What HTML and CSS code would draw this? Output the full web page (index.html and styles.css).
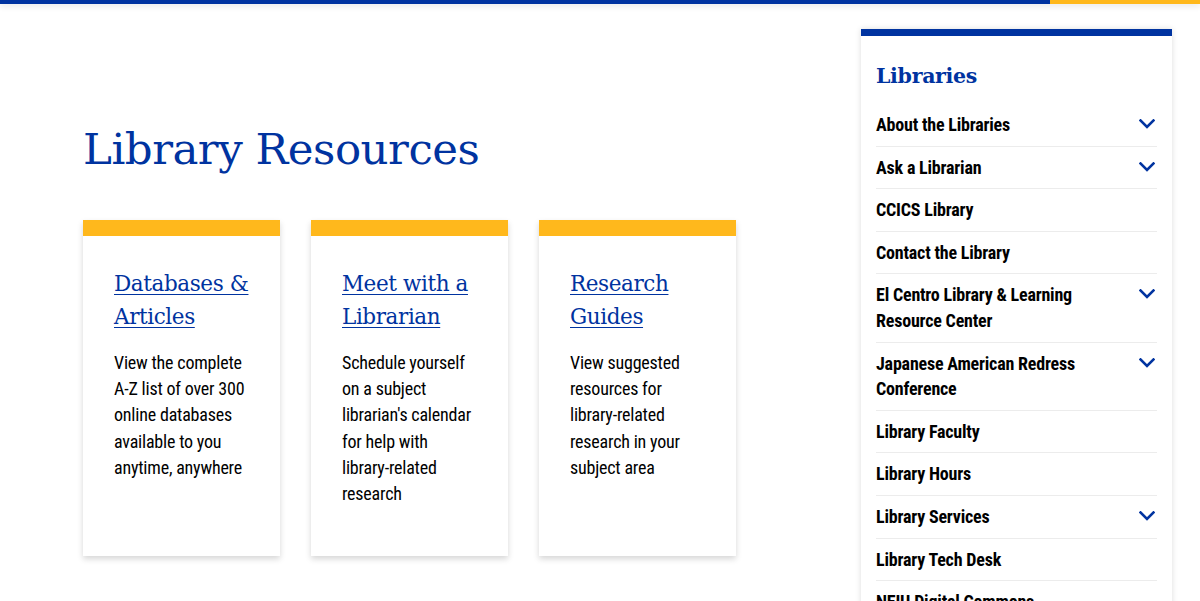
FILE: index.html
```html
<!DOCTYPE html>
<html lang="en">
<head>
<meta charset="utf-8">
<title>Library Resources</title>
<link rel="stylesheet" href="styles.css">
</head>
<body>
<div class="topbar"><div class="topbar-blue"></div><div class="topbar-gold"></div></div>
<div class="page">
  <main class="main">
    <h1 class="title">Library Resources</h1>
    <div class="cards">
      <div class="card">
        <a class="card-link" href="#">Databases &amp; Articles</a>
        <p class="card-text">View the complete A-Z list of over 300 online databases available to you anytime, anywhere</p>
      </div>
      <div class="card">
        <a class="card-link" href="#">Meet with a Librarian</a>
        <p class="card-text">Schedule yourself on a subject librarian's calendar for help with library-related research</p>
      </div>
      <div class="card">
        <a class="card-link" href="#">Research Guides</a>
        <p class="card-text">View suggested resources for library-related research in your subject area</p>
      </div>
    </div>
  </main>
  <aside class="sidebar">
    <h2 class="side-title">Libraries</h2>
    <ul class="side-list">
      <li class="side-item"><span>About the Libraries</span><svg class="chev" viewBox="0 0 16 10"><path d="M1.5 1.5 L8 8 L14.5 1.5"/></svg></li>
      <li class="side-item"><span>Ask a Librarian</span><svg class="chev" viewBox="0 0 16 10"><path d="M1.5 1.5 L8 8 L14.5 1.5"/></svg></li>
      <li class="side-item"><span>CCICS Library</span></li>
      <li class="side-item"><span>Contact the Library</span></li>
      <li class="side-item"><span>El Centro Library &amp; Learning Resource Center</span><svg class="chev" viewBox="0 0 16 10"><path d="M1.5 1.5 L8 8 L14.5 1.5"/></svg></li>
      <li class="side-item"><span>Japanese American Redress Conference</span><svg class="chev" viewBox="0 0 16 10"><path d="M1.5 1.5 L8 8 L14.5 1.5"/></svg></li>
      <li class="side-item"><span>Library Faculty</span></li>
      <li class="side-item"><span>Library Hours</span></li>
      <li class="side-item"><span>Library Services</span><svg class="chev" viewBox="0 0 16 10"><path d="M1.5 1.5 L8 8 L14.5 1.5"/></svg></li>
      <li class="side-item"><span>Library Tech Desk</span></li>
      <li class="side-item"><span>NEIU Digital Commons</span></li>
    </ul>
  </aside>
</div>
</body>
</html>
```
FILE: styles.css
```css
* { box-sizing: border-box; }
html, body { margin: 0; padding: 0; background: #fff; overflow: hidden; height: 601px; }
body { font-family: "Roboto", "Liberation Sans", sans-serif; color: #000; }

.topbar { display: flex; height: 4px; box-shadow: 0 2px 6px rgba(0,0,0,0.12); position: relative; z-index: 2; }
.topbar-blue { flex: 0 0 1050px; background: #0033a0; }
.topbar-gold { flex: 1; background: #ffb81c; }

.page { display: flex; align-items: flex-start; padding-left: 83px; }
.main { flex: 0 0 653px; padding-top: 116px; }

.title {
  margin: 0 0 42px;
  font-family: "DejaVu Serif", "Liberation Serif", serif;
  font-weight: normal;
  font-size: 43.5px;
  line-height: 58px;
  color: #0033a0;
  letter-spacing: -0.5px;
}

.cards { display: flex; gap: 31px; }
.card {
  width: 197px;
  border-top: 16px solid #ffb81c;
  background: #fff;
  box-shadow: 0 3px 6px rgba(0,0,0,0.16);
  padding: 31px 31px 49px 31px;
}
.card-link {
  display: block;
  font-family: "DejaVu Serif", "Liberation Serif", serif;
  font-size: 21.5px;
  line-height: 33px;
  color: #0033a0;
  text-decoration: underline;
  text-underline-offset: 3px;
  text-decoration-thickness: 1px;
  letter-spacing: -0.4px;
}
.card-text {
  margin: 17px 0 0;
  font-family: "Roboto", sans-serif;
  font-stretch: condensed;
  font-size: 18px;
  line-height: 26.2px;
  letter-spacing: -0.2px;
  color: #000;
}

.sidebar {
  flex: 0 0 311px;
  margin-left: 125px;
  margin-top: 25px;
  border-top: 7px solid #0033a0;
  background: #fff;
  box-shadow: 0 0 6px rgba(0,0,0,0.14);
  padding: 24px 15px 0 15px;
}
.side-title {
  margin: 0 0 12px;
  font-family: "DejaVu Serif", "Liberation Serif", serif;
  font-weight: bold;
  font-size: 20.5px;
  line-height: 32px;
  color: #0033a0;
  letter-spacing: -0.3px;
}
.side-list { list-style: none; margin: 0; padding: 0; }
.side-item {
  display: flex;
  justify-content: space-between;
  align-items: flex-start;
  padding: 8px 0;
  border-bottom: 1px solid #ececec;
  font-family: "Roboto", sans-serif;
  font-stretch: condensed;
  font-weight: bold;
  font-size: 18px;
  line-height: 25.6px;
  letter-spacing: -0.2px;
}
.side-item span { max-width: 225px; }
.chev {
  flex: 0 0 16px;
  width: 16px;
  height: 10px;
  margin-top: 7px;
  margin-right: 2px;
  fill: none;
  stroke: #0033a0;
  stroke-width: 2.6;
  stroke-linecap: square;
}
```
